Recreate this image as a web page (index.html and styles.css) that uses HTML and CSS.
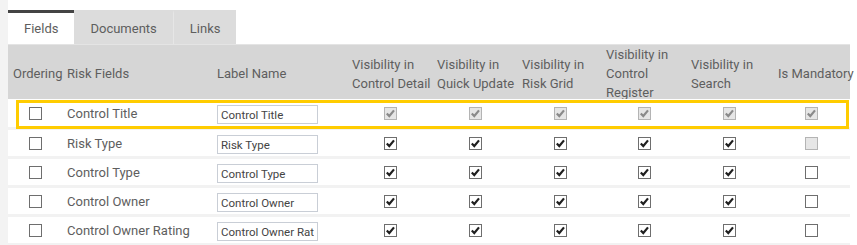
FILE: index.html
```html
<!DOCTYPE html>
<html lang="en">
<head>
    <meta charset="UTF-8">
    <title>Risk Fields</title>
    <link rel="stylesheet" href="styles.css">
</head>
<body>
    <div class="panel">
        <div class="tabs">
            <div class="tab active">Fields</div>
            <div class="tab">Documents</div>
            <div class="tab links">Links</div>
        </div>
        <div class="grid">
            <div class="row head">
                <div class="cell first">Ordering</div>
                <div class="cell">Risk Fields</div>
                <div class="cell">Label Name</div>
                <div class="cell">Visibility in Control Detail</div>
                <div class="cell">Visibility in Quick Update</div>
                <div class="cell">Visibility in Risk Grid</div>
                <div class="cell">Visibility in Control Register</div>
                <div class="cell">Visibility in Search</div>
                <div class="cell nowrap">Is Mandatory</div>
            </div>

            <!-- selected row -->
            <div class="row body selected">
                <div class="cell center"><span class="cb"></span></div>
                <div class="cell">Control Title</div>
                <div class="cell"><input class="label-input" value="Control Title"></div>
                <div class="cell center"><span class="cb checked disabled"><svg viewBox="0 0 13 13"><path d="M2.8 6.4 L5.3 9 L10 3.4"/></svg></span></div>
                <div class="cell center"><span class="cb checked disabled"><svg viewBox="0 0 13 13"><path d="M2.8 6.4 L5.3 9 L10 3.4"/></svg></span></div>
                <div class="cell center"><span class="cb checked disabled"><svg viewBox="0 0 13 13"><path d="M2.8 6.4 L5.3 9 L10 3.4"/></svg></span></div>
                <div class="cell center"><span class="cb checked disabled"><svg viewBox="0 0 13 13"><path d="M2.8 6.4 L5.3 9 L10 3.4"/></svg></span></div>
                <div class="cell center"><span class="cb checked disabled"><svg viewBox="0 0 13 13"><path d="M2.8 6.4 L5.3 9 L10 3.4"/></svg></span></div>
                <div class="cell center"><span class="cb checked disabled"><svg viewBox="0 0 13 13"><path d="M2.8 6.4 L5.3 9 L10 3.4"/></svg></span></div>
            </div>

            <div class="row body">
                <div class="cell center"><span class="cb"></span></div>
                <div class="cell">Risk Type</div>
                <div class="cell"><input class="label-input" value="Risk Type"></div>
                <div class="cell center"><span class="cb checked"><svg viewBox="0 0 13 13"><path d="M2.8 6.4 L5.3 9 L10 3.4"/></svg></span></div>
                <div class="cell center"><span class="cb checked"><svg viewBox="0 0 13 13"><path d="M2.8 6.4 L5.3 9 L10 3.4"/></svg></span></div>
                <div class="cell center"><span class="cb checked"><svg viewBox="0 0 13 13"><path d="M2.8 6.4 L5.3 9 L10 3.4"/></svg></span></div>
                <div class="cell center"><span class="cb checked"><svg viewBox="0 0 13 13"><path d="M2.8 6.4 L5.3 9 L10 3.4"/></svg></span></div>
                <div class="cell center"><span class="cb checked"><svg viewBox="0 0 13 13"><path d="M2.8 6.4 L5.3 9 L10 3.4"/></svg></span></div>
                <div class="cell center"><span class="cb disabled"></span></div>
            </div>

            <div class="row body">
                <div class="cell center"><span class="cb"></span></div>
                <div class="cell">Control Type</div>
                <div class="cell"><input class="label-input" value="Control Type"></div>
                <div class="cell center"><span class="cb checked"><svg viewBox="0 0 13 13"><path d="M2.8 6.4 L5.3 9 L10 3.4"/></svg></span></div>
                <div class="cell center"><span class="cb checked"><svg viewBox="0 0 13 13"><path d="M2.8 6.4 L5.3 9 L10 3.4"/></svg></span></div>
                <div class="cell center"><span class="cb checked"><svg viewBox="0 0 13 13"><path d="M2.8 6.4 L5.3 9 L10 3.4"/></svg></span></div>
                <div class="cell center"><span class="cb checked"><svg viewBox="0 0 13 13"><path d="M2.8 6.4 L5.3 9 L10 3.4"/></svg></span></div>
                <div class="cell center"><span class="cb checked"><svg viewBox="0 0 13 13"><path d="M2.8 6.4 L5.3 9 L10 3.4"/></svg></span></div>
                <div class="cell center"><span class="cb"></span></div>
            </div>

            <div class="row body">
                <div class="cell center"><span class="cb"></span></div>
                <div class="cell">Control Owner</div>
                <div class="cell"><input class="label-input" value="Control Owner"></div>
                <div class="cell center"><span class="cb checked"><svg viewBox="0 0 13 13"><path d="M2.8 6.4 L5.3 9 L10 3.4"/></svg></span></div>
                <div class="cell center"><span class="cb checked"><svg viewBox="0 0 13 13"><path d="M2.8 6.4 L5.3 9 L10 3.4"/></svg></span></div>
                <div class="cell center"><span class="cb checked"><svg viewBox="0 0 13 13"><path d="M2.8 6.4 L5.3 9 L10 3.4"/></svg></span></div>
                <div class="cell center"><span class="cb checked"><svg viewBox="0 0 13 13"><path d="M2.8 6.4 L5.3 9 L10 3.4"/></svg></span></div>
                <div class="cell center"><span class="cb checked"><svg viewBox="0 0 13 13"><path d="M2.8 6.4 L5.3 9 L10 3.4"/></svg></span></div>
                <div class="cell center"><span class="cb"></span></div>
            </div>

            <div class="row body">
                <div class="cell center"><span class="cb"></span></div>
                <div class="cell">Control Owner Rating</div>
                <div class="cell"><input class="label-input" value="Control Owner Rating"></div>
                <div class="cell center"><span class="cb checked"><svg viewBox="0 0 13 13"><path d="M2.8 6.4 L5.3 9 L10 3.4"/></svg></span></div>
                <div class="cell center"><span class="cb checked"><svg viewBox="0 0 13 13"><path d="M2.8 6.4 L5.3 9 L10 3.4"/></svg></span></div>
                <div class="cell center"><span class="cb checked"><svg viewBox="0 0 13 13"><path d="M2.8 6.4 L5.3 9 L10 3.4"/></svg></span></div>
                <div class="cell center"><span class="cb checked"><svg viewBox="0 0 13 13"><path d="M2.8 6.4 L5.3 9 L10 3.4"/></svg></span></div>
                <div class="cell center"><span class="cb checked"><svg viewBox="0 0 13 13"><path d="M2.8 6.4 L5.3 9 L10 3.4"/></svg></span></div>
                <div class="cell center"><span class="cb"></span></div>
            </div>
        </div>
    </div>
</body>
</html>
```

FILE: styles.css
```css
body {
    margin: 0;
    background-color: #f3f3f3;
    font-family: Roboto, "Liberation Sans", Arial, sans-serif;
    font-size: 13px;
    color: #5e5e5e;
}
.panel {
    margin-left: 8px;
    min-height: 245px;
    background-color: white;
    padding-top: 10px;
}
.tabs {
    display: flex;
    height: 34px;
}
.tab {
    box-sizing: border-box;
    height: 34px;
    padding: 0 16px;
    line-height: 31px;
    border-top: 3px solid #dcdcdc;
    background-color: #dcdcdc;
}
.tab.active {
    background-color: white;
    border-top-color: #444;
}
.tab.links {
    border-left: 1px solid #e6e6e6;
}
.grid {
    width: 842px;
}
.row {
    display: grid;
    grid-template-columns: 55px 150px 135px 85px 85px 84px 85px 85px 78px;
}
.row.head {
    height: 55px;
    background-color: #d6d6d6;
    border-top: 1px solid #e4e4e4;
    box-sizing: border-box;
    align-items: center;
    line-height: 19px;
}
.row.head .cell {
    padding-right: 0;
}
.row.body {
    height: 26px;
    align-items: center;
    border-bottom: 3px solid #f2f2f2;
    background-color: white;
}
.row.selected {
    position: relative;
    height: 28px;
}
.row.selected::after {
    content: "";
    position: absolute;
    left: 8px;
    right: 1px;
    top: 1px;
    bottom: -2px;
    border: 3px solid #ffcc00;
    pointer-events: none;
}
.cell {
    padding: 0 4px;
}
.row.head .cell.first {
    padding-left: 5px;
    padding-right: 0;
}
.row.head .cell.nowrap {
    white-space: nowrap;
    padding-left: 6px;
}
.cell.center {
    display: flex;
    justify-content: center;
    padding: 0;
}
.label-input {
    box-sizing: border-box;
    width: 101px;
    height: 19px;
    margin-top: 2px;
    padding: 1px 3px 0;
    border: 1px solid #c9ced6;
    font-family: Roboto, "Liberation Sans", Arial, sans-serif;
    font-size: 11.5px;
    color: #444;
    outline: none;
}
.cb {
    box-sizing: border-box;
    display: inline-block;
    width: 13px;
    height: 13px;
    border: 1px solid #6e6e6e;
    background-color: white;
    position: relative;
}
.cb svg {
    position: absolute;
    left: -1px;
    top: -1px;
    width: 13px;
    height: 13px;
    fill: none;
    stroke: #1f1f1f;
    stroke-width: 2.2;
}
.cb.disabled {
    border-color: #b4b4b4;
    background-color: #e6e6e6;
}
.cb.disabled svg {
    stroke: #8a8a8a;
}
```
